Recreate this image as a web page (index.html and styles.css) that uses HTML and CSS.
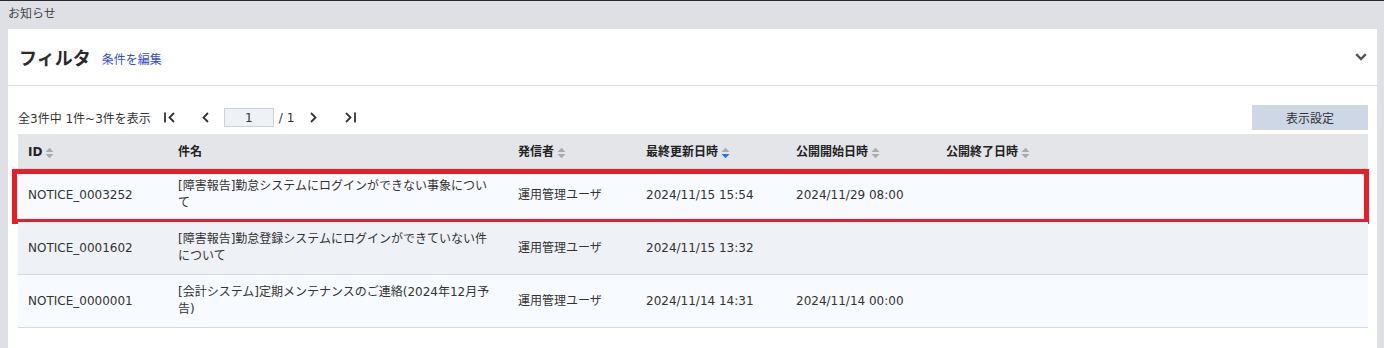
FILE: index.html
```html
<!DOCTYPE html>
<html lang="ja">
<head>
<meta charset="utf-8">
<title>お知らせ</title>
<link rel="stylesheet" href="styles.css">
</head>
<body>
<div class="page-title">お知らせ</div>
<main class="panel">
  <header class="filter-head">
    <h2 class="filter-title">フィルタ</h2>
    <a class="filter-edit" href="#">条件を編集</a>
    <svg class="chevron" width="12" height="8" viewBox="0 0 12 8"><path d="M1.2 1.2 L6 6 L10.8 1.2" fill="none" stroke="#555" stroke-width="2.4"/></svg>
  </header>
  <section class="list">
    <div class="toolbar">
      <div class="pager">
        <span class="count">全3件中 1件~3件を表示</span>
        <svg class="pg first" width="11" height="11" viewBox="0 0 11 11"><path d="M1 0.5 V10.5" stroke="#333" stroke-width="1.8"/><path d="M10 1 L5.5 5.5 L10 10" fill="none" stroke="#333" stroke-width="1.8"/></svg>
        <svg class="pg prev" width="7" height="11" viewBox="0 0 7 11"><path d="M6 1 L1.5 5.5 L6 10" fill="none" stroke="#333" stroke-width="1.8"/></svg>
        <input class="page-input" type="text" value="1">
        <span class="total">/ 1</span>
        <svg class="pg next" width="7" height="11" viewBox="0 0 7 11"><path d="M1 1 L5.5 5.5 L1 10" fill="none" stroke="#333" stroke-width="1.8"/></svg>
        <svg class="pg last" width="11" height="11" viewBox="0 0 11 11"><path d="M1 1 L5.5 5.5 L1 10" fill="none" stroke="#333" stroke-width="1.8"/><path d="M10 0.5 V10.5" stroke="#333" stroke-width="1.8"/></svg>
      </div>
      <button class="display-btn" type="button">表示設定</button>
    </div>
    <div class="table">
      <div class="row head">
        <div class="cell">ID<svg class="sort" width="9" height="12" viewBox="0 0 9 12"><path d="M0.5 5 L4.5 0.8 L8.5 5 Z" fill="#aaa"/><path d="M0.5 7 L4.5 11.2 L8.5 7 Z" fill="#aaa"/></svg></div>
        <div class="cell title">件名</div>
        <div class="cell">発信者<svg class="sort" width="9" height="12" viewBox="0 0 9 12"><path d="M0.5 5 L4.5 0.8 L8.5 5 Z" fill="#aaa"/><path d="M0.5 7 L4.5 11.2 L8.5 7 Z" fill="#aaa"/></svg></div>
        <div class="cell">最終更新日時<svg class="sort" width="9" height="12" viewBox="0 0 9 12"><path d="M0.5 5 L4.5 0.8 L8.5 5 Z" fill="#aaa"/><path d="M0.5 7 L4.5 11.2 L8.5 7 Z" fill="#2b74e0"/></svg></div>
        <div class="cell">公開開始日時<svg class="sort" width="9" height="12" viewBox="0 0 9 12"><path d="M0.5 5 L4.5 0.8 L8.5 5 Z" fill="#aaa"/><path d="M0.5 7 L4.5 11.2 L8.5 7 Z" fill="#aaa"/></svg></div>
        <div class="cell">公開終了日時<svg class="sort" width="9" height="12" viewBox="0 0 9 12"><path d="M0.5 5 L4.5 0.8 L8.5 5 Z" fill="#aaa"/><path d="M0.5 7 L4.5 11.2 L8.5 7 Z" fill="#aaa"/></svg></div>
      </div>
      <div class="row odd highlighted">
        <div class="cell">NOTICE_0003252</div>
        <div class="cell title">[障害報告]勤怠システムにログインができない事象について</div>
        <div class="cell">運用管理ユーザ</div>
        <div class="cell">2024/11/15 15:54</div>
        <div class="cell">2024/11/29 08:00</div>
        <div class="cell"></div>
      </div>
      <div class="row even">
        <div class="cell">NOTICE_0001602</div>
        <div class="cell title">[障害報告]勤怠登録システムにログインができていない件について</div>
        <div class="cell">運用管理ユーザ</div>
        <div class="cell">2024/11/15 13:32</div>
        <div class="cell"></div>
        <div class="cell"></div>
      </div>
      <div class="row odd">
        <div class="cell">NOTICE_0000001</div>
        <div class="cell title">[会計システム]定期メンテナンスのご連絡(2024年12月予告)</div>
        <div class="cell">運用管理ユーザ</div>
        <div class="cell">2024/11/14 14:31</div>
        <div class="cell">2024/11/14 00:00</div>
        <div class="cell"></div>
      </div>
    </div>
  </section>
</main>
</body>
</html>
```
FILE: styles.css
```css
* { box-sizing: border-box; }
html, body { height: 100%; }
body {
  margin: 0;
  background: #dfe0e5;
  border-top: 1px solid #2a2a2a;
  font-family: "DejaVu Sans", "Noto Sans CJK JP", sans-serif;
  font-size: 12px;
  color: #333;
  display: flex;
  flex-direction: column;
}
.page-title {
  height: 28px;
  line-height: 26px;
  padding: 0 8px;
  color: #444;
}
.panel {
  flex: 1;
  margin: 0 7px 0 8px;
  background: #fff;
}
.filter-head {
  height: 57px;
  display: flex;
  align-items: center;
  padding: 0 10px 0 11px;
  border-bottom: 1px solid #dcdcdc;
}
.filter-title {
  margin: 0;
  font-size: 18px;
  font-weight: bold;
  color: #2b2b2b;
  font-family: "Noto Sans CJK JP", sans-serif;
}
.filter-edit {
  margin-left: 11px;
  margin-top: 2px;
  color: #3650c4;
  text-decoration: none;
}
.chevron { margin-left: auto; }
.list { padding: 0 9px 0 10px; }
.toolbar {
  margin-top: 19px;
  height: 25px;
  display: flex;
  align-items: center;
  justify-content: space-between;
}
.pager { display: flex; align-items: center; }
.count { color: #333; }
.pg { display: block; }
.pg.first { margin-left: 13px; }
.pg.prev { margin-left: 27px; }
.page-input {
  margin-left: 15px;
  width: 50px;
  height: 19px;
  border: 1px solid #cfd3d8;
  background: #eef1f5;
  font: inherit;
  text-align: center;
  color: #333;
  padding: 0;
}
.total { margin-left: 5px; }
.pg.next { margin-left: 16px; }
.pg.last { margin-left: 28px; }
.display-btn {
  width: 116px;
  height: 25px;
  border: none;
  background: #cdd7e6;
  font: inherit;
  color: #333;
  padding: 0;
}
.table { margin-top: 4px; }
.row {
  display: grid;
  grid-template-columns: 150px 340px 128px 150px 150px 1fr;
  position: relative;
}
.cell {
  padding: 0 10px;
  display: flex;
  align-items: center;
  line-height: 17px;
}
.cell.title { padding-right: 14px; display: block; align-self: center; }
.row.head {
  height: 35px;
  padding-top: 2px;
  background: #e3e5e9;
  font-weight: bold;
  color: #222;
}
.row.head .cell.title { display: flex; }
.sort { margin-left: 3px; flex: none; }
.row.odd, .row.even {
  height: 53px;
  border-bottom: 1px solid #d6d9dd;
}
.row.odd { background: #f7fafe; }
.row.even { background: #eef1f6; }
.row.highlighted::after {
  content: "";
  position: absolute;
  top: 0;
  left: -6px;
  right: -1px;
  bottom: -3px;
  border: 5px solid #ea1c27;
  pointer-events: none;
}
```
